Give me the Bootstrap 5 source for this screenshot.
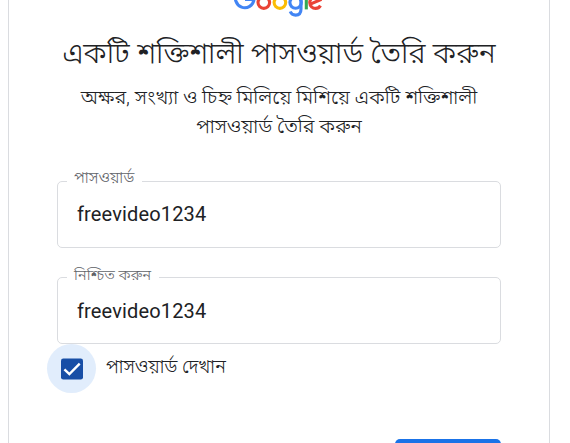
<!DOCTYPE html>
<html lang="bn">
<head>
<meta charset="utf-8">
<meta name="viewport" content="width=device-width, initial-scale=1">
<title>Google</title>
<link href="https://cdn.jsdelivr.net/npm/bootstrap@5.3.0/dist/css/bootstrap.min.css" rel="stylesheet">
<style>
body{font-family:Roboto,"Noto Sans Bengali","Noto Sans",sans-serif;color:#202124;height:443px;overflow:hidden}
.signup-panel{width:542px;height:443px;margin-left:8px;border:solid #dadce0;border-width:0 1px;padding:0 48px}
.brand-logo{width:90px;height:17px;margin-left:177px}
.main-title{font-size:29.4px;font-weight:300;line-height:36px;margin-top:18px;white-space:nowrap}
.sub-title{font-size:19.9px;font-weight:300;line-height:29px;margin-top:12px;white-space:nowrap}
.field-box{width:444px;height:67px;border:1px solid #dadce0;border-radius:5px}
.field-box.first{margin-top:40px}
.field-box.second{margin-top:29px}
.field-label{left:9px;top:-13px;height:20px;padding:0 8px 0 7px;font-size:15.2px;font-weight:300;line-height:20px;color:#5f6368;white-space:nowrap}
.first .field-label{font-size:15.8px;top:-14px}
.field-input{height:65px;padding:0 19px;border:0;font-size:20px;letter-spacing:.15px;color:#202124;background:transparent;box-shadow:none!important}
.first .field-input{padding-bottom:2px}
.halo{width:49px;height:49px;background:#e1edfc;margin-left:-10px}
.show-label{font-size:18.7px;font-weight:300;line-height:26px;margin-left:10px;margin-top:-3px;white-space:nowrap}
.next-btn{width:106px;height:45px;margin-top:46px;background:#1a73e8;border:0;border-radius:5px;font-size:17px}
</style>
<script src="https://cdn.jsdelivr.net/npm/bootstrap@5.3.0/dist/js/bootstrap.bundle.min.js"></script>
</head>
<body class="bg-white">
<main class="signup-panel overflow-hidden">
  <svg class="brand-logo d-block" viewBox="234 0 90 17" fill="none" stroke-width="3.1" role="img" aria-label="Google">
    <path d="M251.5-8A9.3 9.3 0 1 0 254-.5H245" stroke="#4285f4"/>
    <circle cx="263.8" cy="2.6" r="5.8" stroke="#ea4335"/>
    <circle cx="279.9" cy="2.6" r="5.8" stroke="#fbbc05"/>
    <path d="M301-4V9C301 13.2 298.7 15.1 295.6 15.1C293.2 15.1 291.2 13.8 290.2 11.5" stroke="#4285f4"/>
    <circle cx="295.6" cy="2.6" r="5.7" stroke="#4285f4"/>
    <path d="M306.3-12V9.4" stroke="#34a853"/>
    <path d="M309.8 4.4L320-.1C318.9-2.4 317.3-3.2 315.4-3.2A5.8 5.8 0 0 0 315.7 8.4C317.8 8.4 319.4 7.4 320.5 5.6" stroke="#ea4335"/>
  </svg>
  <h1 class="main-title text-center mb-0">একটি শক্তিশালী পাসওয়ার্ড তৈরি করুন</h1>
  <p class="sub-title text-center mb-0">অক্ষর, সংখ্যা ও চিহ্ন মিলিয়ে মিশিয়ে একটি শক্তিশালী<br>পাসওয়ার্ড তৈরি করুন</p>
  <div class="field-box first position-relative">
    <label class="field-label position-absolute bg-white" for="pw">পাসওয়ার্ড</label>
    <input class="field-input form-control" id="pw" type="text" value="freevideo1234" spellcheck="false">
  </div>
  <div class="field-box second position-relative">
    <label class="field-label position-absolute bg-white" for="pw2">নিশ্চিত করুন</label>
    <input class="field-input form-control" id="pw2" type="text" value="freevideo1234" spellcheck="false">
  </div>
  <div class="d-flex align-items-center">
    <div class="halo rounded-circle d-flex align-items-center justify-content-center">
      <svg width="23" height="22" viewBox="0 0 23 22" fill="none"><rect x="1" y=".5" width="22" height="21" rx="2.3" fill="#174ea6"/><path d="M4.4 11.3L9.4 16.1L19.7 5.7" stroke="#fff" stroke-width="2.4"/></svg>
    </div>
    <span class="show-label">পাসওয়ার্ড দেখান</span>
  </div>
  <button class="next-btn btn btn-primary d-block ms-auto" type="button" aria-label="পরবর্তী"></button>
</main>
</body>
</html>
